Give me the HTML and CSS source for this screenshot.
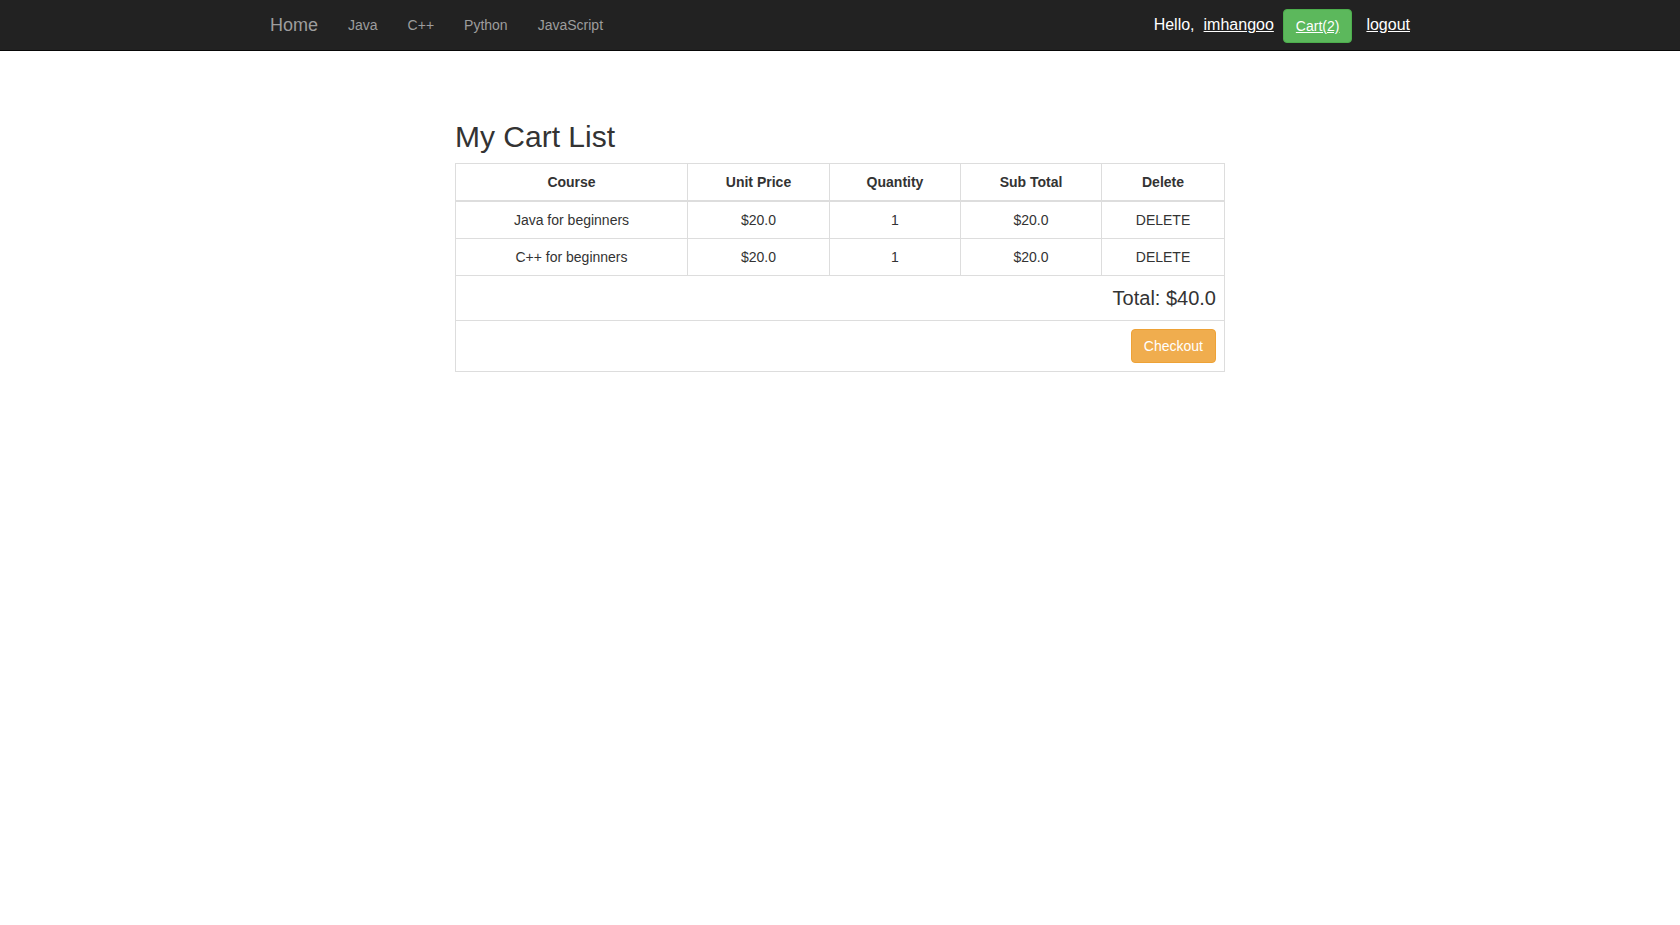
FILE: index.html
```html
<!DOCTYPE html>
<html lang="en">
<head>
<meta charset="utf-8">
<title>My Cart List</title>
<link rel="stylesheet" href="styles.css">
</head>
<body>
<nav class="navbar">
  <div class="container nav-inner">
    <div class="nav-left">
      <a class="brand" href="#">Home</a>
      <ul class="nav-links">
        <li><a href="#">Java</a></li>
        <li><a href="#">C++</a></li>
        <li><a href="#">Python</a></li>
        <li><a href="#">JavaScript</a></li>
      </ul>
    </div>
    <div class="nav-right">
      <span class="hello">Hello,</span>
      <a class="user" href="#">imhangoo</a>
      <a class="btn btn-success" href="#">Cart(2)</a>
      <a class="logout" href="#">logout</a>
    </div>
  </div>
</nav>
<main class="container page">
  <div class="cart">
    <h2 class="title">My Cart List</h2>
    <table class="cart-table">
      <colgroup>
        <col class="c-course">
        <col class="c-price">
        <col class="c-qty">
        <col class="c-sub">
        <col class="c-del">
      </colgroup>
      <thead>
        <tr>
          <th>Course</th>
          <th>Unit Price</th>
          <th>Quantity</th>
          <th>Sub Total</th>
          <th>Delete</th>
        </tr>
      </thead>
      <tbody>
        <tr>
          <td>Java for beginners</td>
          <td>$20.0</td>
          <td>1</td>
          <td>$20.0</td>
          <td>DELETE</td>
        </tr>
        <tr>
          <td>C++ for beginners</td>
          <td>$20.0</td>
          <td>1</td>
          <td>$20.0</td>
          <td>DELETE</td>
        </tr>
        <tr>
          <td colspan="5" class="total">Total: $40.0</td>
        </tr>
        <tr>
          <td colspan="5" class="actions"><a class="btn btn-warning" href="#">Checkout</a></td>
        </tr>
      </tbody>
    </table>
  </div>
</main>
</body>
</html>
```

FILE: styles.css
```css
* {
  box-sizing: border-box;
}

html, body {
  margin: 0;
  padding: 0;
}

body {
  font-family: "Liberation Sans", Arial, Helvetica, sans-serif;
  font-size: 14px;
  line-height: 1.42857143;
  color: #333;
  background: #fff;
}

.container {
  width: 1170px;
  margin: 0 auto;
  padding: 0 15px;
}

/* Navbar */
.navbar {
  background: #222;
  border-bottom: 1px solid #080808;
  height: 51px;
}

.nav-inner {
  display: flex;
  justify-content: space-between;
  align-items: stretch;
  height: 50px;
}

.nav-left {
  display: flex;
  align-items: stretch;
  margin-left: -15px;
}

.brand {
  display: block;
  padding: 15px;
  font-size: 18px;
  line-height: 20px;
  height: 50px;
  color: #9d9d9d;
  text-decoration: none;
}

.nav-links {
  display: flex;
  list-style: none;
  margin: 0;
  padding: 0;
}

.nav-links a {
  display: block;
  padding: 15px;
  line-height: 20px;
  color: #9d9d9d;
  text-decoration: none;
}

.nav-right {
  display: flex;
  align-items: center;
  font-size: 16px;
  line-height: 20px;
  color: #fff;
}

.nav-right a {
  color: #fff;
  text-decoration: underline;
}

.user {
  margin-left: 9px;
}

.nav-right .btn {
  margin-left: 9px;
  margin-top: 2px;
}

.logout {
  margin-left: 14px;
}

.btn {
  display: inline-block;
  padding: 6px 12px;
  font-size: 14px;
  line-height: 20px;
  border: 1px solid transparent;
  border-radius: 4px;
  color: #fff;
}

.btn-success {
  background: #5cb85c;
  border-color: #4cae4c;
}

.nav-right .btn-success {
  color: #fff;
  text-decoration: underline;
}

.btn-warning {
  background: #f0ad4e;
  border-color: #eea236;
  text-decoration: none;
}

/* Page */
.page {
  padding-top: 69px;
}

.cart {
  width: 770px;
  margin: 0 auto;
}

.title {
  margin: 0 0 10px;
  font-size: 30px;
  font-weight: 500;
  line-height: 1.1;
  color: #333;
}

.cart-table {
  width: 770px;
  border-collapse: collapse;
  border-spacing: 0;
  table-layout: fixed;
  border: 1px solid #ddd;
}

.c-course { width: 232px; }
.c-price { width: 142px; }
.c-qty { width: 131px; }
.c-sub { width: 141px; }

.cart-table th,
.cart-table td {
  padding: 8px;
  border: 1px solid #ddd;
  text-align: center;
  vertical-align: top;
  line-height: 20px;
}

.cart-table th {
  font-weight: bold;
  border-bottom: 2px solid #ddd;
}

.cart-table td.total {
  text-align: right;
  font-size: 20px;
  line-height: 28px;
}

.cart-table td.actions {
  text-align: right;
}
```
